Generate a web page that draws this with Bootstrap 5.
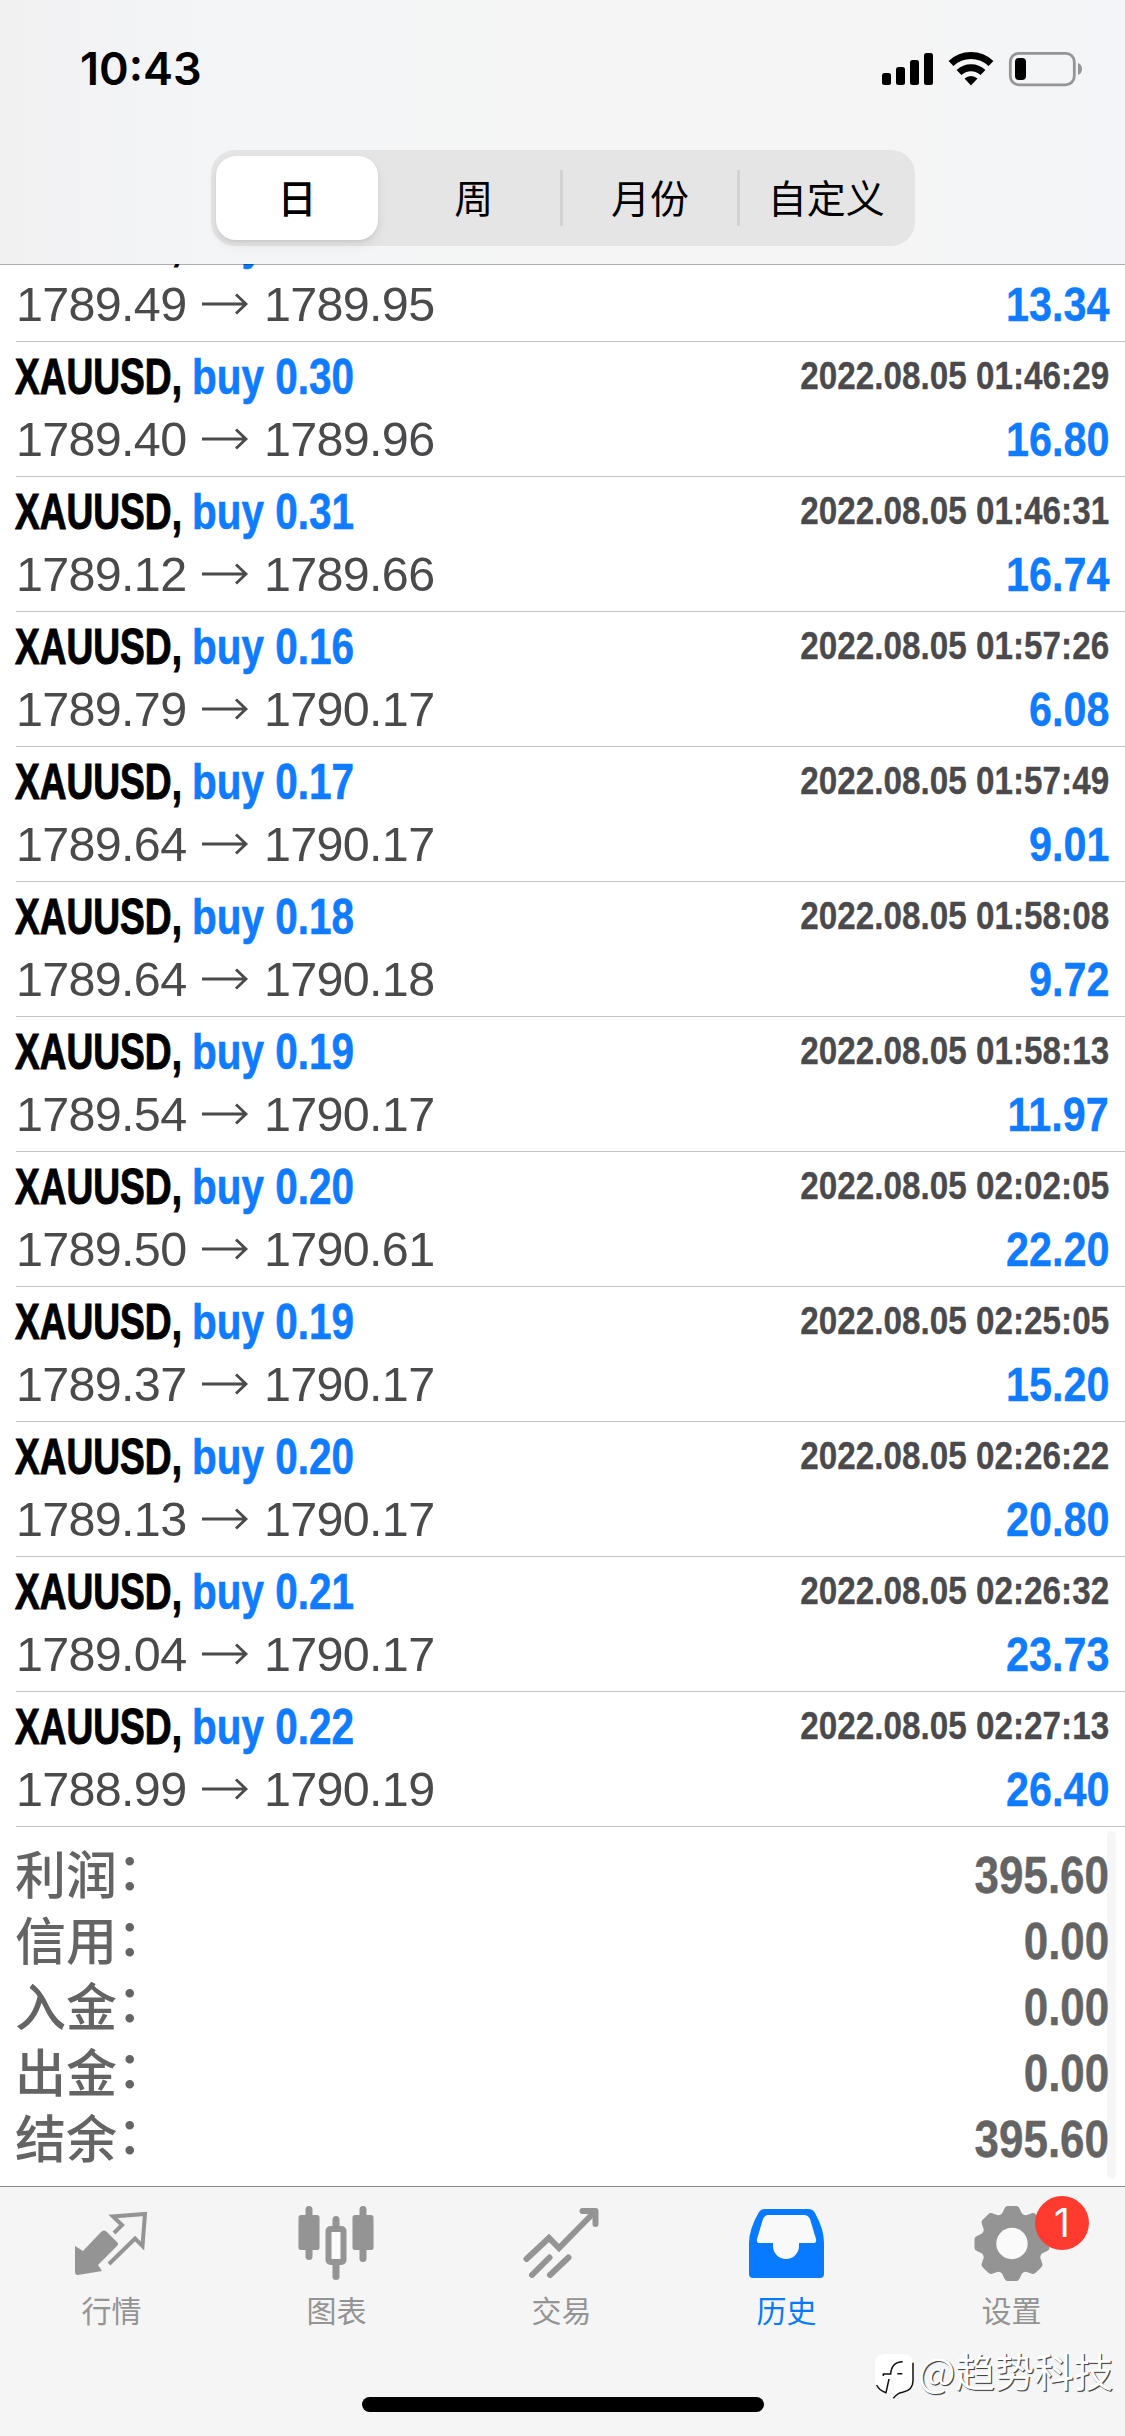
<!DOCTYPE html>
<html lang="zh-CN">
<head>
<meta charset="utf-8">
<meta name="viewport" content="width=device-width, initial-scale=1">
<title>历史</title>
<link href="https://cdn.jsdelivr.net/npm/bootstrap@5.3.0/dist/css/bootstrap.min.css" rel="stylesheet">
<style>
  body { width: 1125px; height: 2436px; overflow: hidden; background: #fff; font-family: "Liberation Sans", "Noto Sans CJK SC", sans-serif; }
  .topbar { height: 264px; z-index: 2; background: linear-gradient(90deg, #f1f1f2 0, #f4f5f7 220px, #f5f5f5 600px, #f5f5f5 850px, #f4f5f8 100%); box-shadow: 0 1px 0 rgba(0,0,0,.32); }
  .statusbar { height: 150px; padding: 0 41px 0 80px; }
  .clock { font: 600 45px/52px Inter, sans-serif; margin-top: 43px; color: #000; }
  .status-icons { margin-top: 46px; }
  .segments { width: 704px; height: 96px; margin-left: 211px; padding: 6px 2px 6px 5px; border-radius: 24px; background: #e5e5e6; font: 400 39px/80px "Noto Sans CJK SC", sans-serif; color: #000; }
  .segments > div { flex: 1 0 0; height: 84px; text-align: center; }
  .segments .chosen { flex: 0 0 162px; margin-right: 9px; background: #fff; border-radius: 20px; font-weight: 500; box-shadow: 0 5px 12px rgba(0,0,0,.08), 0 2px 3px rgba(0,0,0,.05); }
  .segments .bar { flex: 0 0 3px; height: 56px; background: #d2d2d4; }
  .history { margin-top: -57px; }
  .deal { height: 135px; margin-left: 16px; padding: 5px 16px 0 0; border-bottom: 1px solid #c4c4c6; white-space: nowrap; }
  .symbol, .volume, .stamp, .gain, .total { display: inline-block; font-weight: 700; }
  .deal-head { height: 61px; font-size: 50px; line-height: 60px; }
  .symbol { width: 177px; color: #000; margin-left: -1px; transform: scaleX(.742); transform-origin: 0 0; -webkit-text-stroke: 1px currentColor; }
  .volume { color: #0f7bff; transform: scaleX(.81); transform-origin: 0 0; -webkit-text-stroke: .6px currentColor; }
  .stamp { font-size: 39px; line-height: 58px; color: #4a4a4c; transform: scaleX(.853); transform-origin: 100% 0; -webkit-text-stroke: .3px currentColor; }
  .deal-body { font-size: 48.500px; line-height: 62px; color: #4a4a4c; }
  .quote-price { width: 173px; letter-spacing: -.7px; }
  .gain { color: #0f7bff; transform: scaleX(.852); transform-origin: 100% 0; -webkit-text-stroke: .4px currentColor; }
  .summary { height: 359px; padding: 16px 16px 0 16px; color: #646464; }
  .summary-line { height: 66px; line-height: 66px; font-size: 51px; }
  .caption-cn { font: 500 51px/59px "Noto Sans CJK SC", sans-serif; height: 66px; margin-left: -1px; }
  .caption-cn i { display: inline-block; font-style: normal; transform: translate(0, -4px); }
  .total { transform: scaleX(.862); transform-origin: 100% 0; -webkit-text-stroke: .4px currentColor; }
  .scroll-thumb { position: absolute; right: 9px; top: 4px; width: 9px; height: 348px; border-radius: 5px; background: rgba(0,0,0,.035); }
  .tabs { height: 251px; background: #f5f5f5; border-top: 1px solid #858585; color: #949494; }
  .tab { width: 225px; font: 400 30px/40px "Noto Sans CJK SC", sans-serif; padding: 16px 2px 0 0; }
  .tab svg { height: 84px; width: 90px; display: block; margin-bottom: 2px; }
  .tab.on { color: #087aff; }
  .alert-count { position: absolute; left: 135px; top: 9px; width: 54px; height: 54px; border-radius: 50%; background: #ff3b30; color: #fff; font: 400 39px/54px Inter, sans-serif; text-align: center; }
  .home-bar { position: absolute; left: 362px; top: 210px; width: 402px; height: 15px; border-radius: 8px; background: #000; }
  .credit { position: absolute; left: 874px; top: 158px; color: #fff; font: 400 39.500px/50px "Noto Sans CJK SC", sans-serif; text-shadow: 1px 1px 0 #444, 1px 1px 1px #777; white-space: nowrap; }
</style>
<script src="https://cdn.jsdelivr.net/npm/bootstrap@5.3.0/dist/js/bootstrap.bundle.min.js"></script>
</head>
<body>
<header class="topbar position-relative">
  <div class="statusbar d-flex justify-content-between align-items-start">
    <div class="clock">10:43</div>
    <svg class="status-icons" width="204" height="46" viewBox="880 46 204 46">
      <rect x="882" y="73" width="9" height="12" rx="2.500"/><rect x="896" y="67" width="9" height="18" rx="2.500"/><rect x="910" y="60" width="9" height="25" rx="2.500"/><rect x="924" y="53" width="9" height="32" rx="2.500"/>
      <g fill="none" stroke="#000" stroke-width="7"><path d="M951 63.500a29 29 0 0 1 40 0"/><path d="M959 72.500a17.500 17.500 0 0 1 24 0"/></g>
      <path d="M964.500 78.500a9.500 9.500 0 0 1 13 0L971 85.500z"/>
      <rect x="1010.300" y="53.300" width="64" height="31.500" rx="8.500" fill="none" stroke="#959597" stroke-width="2.800"/>
      <path d="M1078 63q4 1.500 4 6t-4 6z" fill="#959597"/><rect x="1015" y="58" width="11" height="22" rx="4"/>
    </svg>
  </div>
  <div class="segments d-flex align-items-center">
    <div class="chosen">日</div><div>周</div><div class="bar"></div><div>月份</div><div class="bar"></div><div>自定义</div>
  </div>
</header>

<main>
  <section class="history" id="history"></section>
  <section class="summary position-relative">
    <div class="summary-line d-flex justify-content-between"><span class="caption-cn">利润<i>：</i></span><span class="total">395.60</span></div>
    <div class="summary-line d-flex justify-content-between"><span class="caption-cn">信用<i>：</i></span><span class="total">0.00</span></div>
    <div class="summary-line d-flex justify-content-between"><span class="caption-cn">入金<i>：</i></span><span class="total">0.00</span></div>
    <div class="summary-line d-flex justify-content-between"><span class="caption-cn">出金<i>：</i></span><span class="total">0.00</span></div>
    <div class="summary-line d-flex justify-content-between"><span class="caption-cn">结余<i>：</i></span><span class="total">395.60</span></div>
    <div class="scroll-thumb"></div>
  </section>
</main>

<footer class="tabs d-flex align-items-start position-relative">
  <div class="tab d-flex flex-column align-items-center">
    <svg viewBox="67 2203 90 84"><path fill="currentColor" d="M75 2246L83 2251L101 2232Q104 2229 107 2232L117 2242Q119 2244 117 2246L98 2265L102 2271L78 2275Q75 2275 75 2272z"/><path fill="none" stroke="currentColor" stroke-width="4" d="M114 2233L122 2225L113 2216.500L145 2214L142.500 2246L135 2238.500L109 2264"/></svg>
    <span>行情</span></div>
  <div class="tab d-flex flex-column align-items-center">
    <svg viewBox="292.500 2203 90 84"><g fill="currentColor"><rect x="306" y="2206" width="7" height="54" rx="3.500"/><rect x="299" y="2215" width="21" height="35" rx="2.500"/><rect x="360" y="2206" width="7" height="56" rx="3.500"/><rect x="353" y="2215" width="21" height="35" rx="2.500"/><rect x="333" y="2216" width="7" height="20" rx="3.500"/><rect x="333" y="2256" width="7" height="24" rx="3.500"/></g><rect x="329" y="2229" width="15" height="33" rx="2" fill="#fbfbfb" stroke="currentColor" stroke-width="6"/></svg>
    <span>图表</span></div>
  <div class="tab d-flex flex-column align-items-center">
    <svg viewBox="517.500 2203 90 84"><g fill="none" stroke="currentColor" stroke-width="6" stroke-linecap="round"><path d="M527 2259L549.500 2238L559.500 2248L594 2213"/><path stroke-linejoin="round" d="M583 2211H596V2224"/><path d="M532.500 2275L550 2257.500M550.500 2275L569 2257.500"/></g></svg>
    <span>交易</span></div>
  <div class="tab on d-flex flex-column align-items-center">
    <svg viewBox="742 2203 90 84"><path fill="currentColor" d="M764 2209H808Q813 2209 815 2213Q824 2229 824 2243V2274Q824 2278 820 2278H753Q749 2278 749 2274V2243Q749 2229 759 2212Q761 2209 764 2209z"/><path fill="#f9f9f9" d="M768 2215H804Q808 2215 810 2219L816 2239Q817 2243 813 2243H799V2246A13 13 0 0 1 773 2246V2243H760Q756 2243 757 2239L763 2219Q765 2215 768 2215z"/></svg>
    <span>历史</span></div>
  <div class="tab d-flex flex-column align-items-center position-relative">
    <svg viewBox="-45 -40.500 90 84"><g fill="currentColor"><circle r="30.500"/><g id="teeth"><path id="tooth" d="M-12.500 -28L-10 -30L-7 -36Q-6 -37.500 -4 -37.500H4Q6 -37.500 7 -36L10 -30L12.500 -28V28L10 30L7 36Q6 37.500 4 37.500H-4Q-6 37.500 -7 36L-10 30L-12.500 28z"/><use href="#tooth" transform="rotate(45)"/></g><use href="#teeth" transform="rotate(90)"/></g><circle r="15.700" fill="#fafafa"/></svg>
    <span>设置</span><div class="alert-count">1</div></div>
  <div class="credit d-flex align-items-center">
    <svg width="44" height="50" viewBox="12 15 132 150" overflow="visible"><path d="M45 42H100Q130 42 130 72V120Q130 152 98 155L70 175V158H48Q15 150 15 120V72Q15 42 45 42z" fill="#fff"/><path d="M57 117L48 158L46 175H68L74 158L78 112z" fill="#f5f5f5" opacity=".5"/><g fill="none" stroke="#111" stroke-width="4.500"><path d="M129 68V122Q129 150 98 157Q84 158 70 175M20 135Q28 152 48 158L57 117"/><path d="M40 108V102H62Q64 66 98 65M82 101H97"/></g></svg>
    <span class="ms-n1">@趋势科技</span></div>
  <div class="home-bar"></div>
</footer>

<script>
  const deals = [
    ["0.29", "2022.08.05 01:46:27", "1789.49", "1789.95", "13.34"],
    ["0.30", "2022.08.05 01:46:29", "1789.40", "1789.96", "16.80"],
    ["0.31", "2022.08.05 01:46:31", "1789.12", "1789.66", "16.74"],
    ["0.16", "2022.08.05 01:57:26", "1789.79", "1790.17", "6.08"],
    ["0.17", "2022.08.05 01:57:49", "1789.64", "1790.17", "9.01"],
    ["0.18", "2022.08.05 01:58:08", "1789.64", "1790.18", "9.72"],
    ["0.19", "2022.08.05 01:58:13", "1789.54", "1790.17", "11.97"],
    ["0.20", "2022.08.05 02:02:05", "1789.50", "1790.61", "22.20"],
    ["0.19", "2022.08.05 02:25:05", "1789.37", "1790.17", "15.20"],
    ["0.20", "2022.08.05 02:26:22", "1789.13", "1790.17", "20.80"],
    ["0.21", "2022.08.05 02:26:32", "1789.04", "1790.17", "23.73"],
    ["0.22", "2022.08.05 02:27:13", "1788.99", "1790.19", "26.40"]
  ];
  const arrow = '<svg width="75" height="34" viewBox="0 0 75 34"><path d="M13 17H57M47 7.500L57 17L47 26.500" fill="none" stroke="#4a4a4c" stroke-width="2.800"/></svg>';
  document.getElementById("history").innerHTML = deals.map(([lot, time, open, close, gain]) => `
    <div class="deal">
      <div class="deal-head d-flex justify-content-between align-items-start">
        <div class="d-flex"><span class="symbol">XAUUSD,</span><span class="volume">buy ${lot}</span></div>
        <span class="stamp">${time}</span>
      </div>
      <div class="deal-body d-flex justify-content-between">
        <div class="d-flex align-items-center"><span class="quote-price">${open}</span>${arrow}<span class="quote-price">${close}</span></div>
        <span class="gain">${gain}</span>
      </div>
    </div>`).join("");
</script>
</body>
</html>
